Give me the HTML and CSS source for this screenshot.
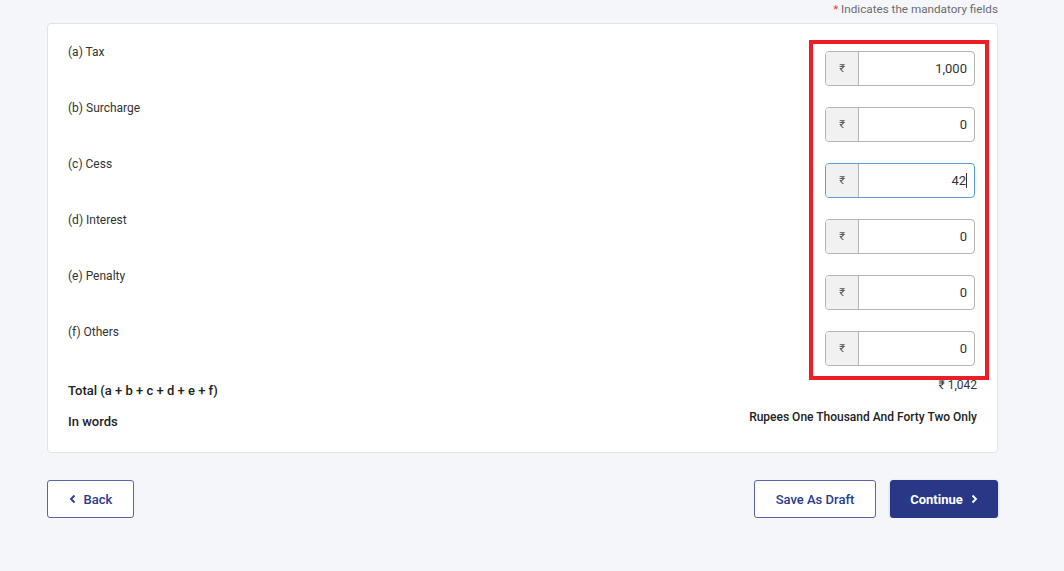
FILE: index.html
```html
<!DOCTYPE html>
<html lang="en">
<head>
<meta charset="utf-8">
<title>Tax details</title>
<link rel="stylesheet" href="styles.css">
</head>
<body>
<div class="page">
  <div class="note"><span class="req">*</span> Indicates the mandatory fields</div>
  <div class="card">
    <div class="fields">
      <div class="labels">
        <div class="label">(a) Tax</div>
        <div class="label">(b) Surcharge</div>
        <div class="label">(c) Cess</div>
        <div class="label">(d) Interest</div>
        <div class="label">(e) Penalty</div>
        <div class="label">(f) Others</div>
      </div>
      <div class="annot">
        <div class="input"><span class="pre">₹</span><span class="val">1,000</span></div>
        <div class="input"><span class="pre">₹</span><span class="val">0</span></div>
        <div class="input focus"><span class="pre">₹</span><span class="val">42<span class="caret"></span></span></div>
        <div class="input"><span class="pre">₹</span><span class="val">0</span></div>
        <div class="input"><span class="pre">₹</span><span class="val">0</span></div>
        <div class="input"><span class="pre">₹</span><span class="val">0</span></div>
      </div>
    </div>
    <div class="sum-row total">
      <div class="sum-label">Total (a + b + c + d + e + f)</div>
      <div class="sum-val">₹ 1,042</div>
    </div>
    <div class="sum-row words">
      <div class="sum-label">In words</div>
      <div class="sum-val bold">Rupees One Thousand And Forty Two Only</div>
    </div>
  </div>
  <div class="actions">
    <button class="btn outline back"><svg width="8" height="10" viewBox="0 0 8 10"><path d="M5.5 1.5 2 5l3.5 3.5" fill="none" stroke="currentColor" stroke-width="1.8"/></svg>Back</button>
    <div class="right">
      <button class="btn outline draft">Save As Draft</button>
      <button class="btn primary">Continue<svg width="8" height="10" viewBox="0 0 8 10"><path d="M2.5 1.5 6 5 2.5 8.5" fill="none" stroke="currentColor" stroke-width="1.8"/></svg></button>
    </div>
  </div>
</div>
</body>
</html>
```
FILE: styles.css
```css
html, body {
  margin: 0;
  padding: 0;
  background: #f5f6fa;
  font-family: Roboto, "Liberation Sans", sans-serif;
  color: #333;
}
.page {
  width: 951px;
  margin-left: 47px;
}
.note {
  text-align: right;
  font-size: 11.7px;
  line-height: 16px;
  color: #6b6b6b;
  padding-top: 1px;
  height: 22px;
}
.req { color: #e53935; }
.card {
  background: #fff;
  border: 1px solid #e0e3ec;
  border-radius: 4px;
  padding: 16px 20px 22px 20px;
  box-sizing: border-box;
  height: 430px;
}
.fields {
  display: flex;
  justify-content: space-between;
}
.labels {
  padding-top: 4px;
}
.label {
  font-size: 12px;
  line-height: 16px;
  height: 56px;
  color: #333;
}
.annot {
  border: 4px solid #ee1c25;
  padding: 7px 10px 7px 12px;
  margin-right: -12px;
  display: flex;
  flex-direction: column;
  gap: 21px;
}
.input {
  width: 150px;
  height: 35px;
  box-sizing: border-box;
  border: 1px solid #b3b3b3;
  border-radius: 4px;
  display: flex;
  overflow: hidden;
  background: #fff;
}
.input.focus {
  border-color: #5b9be6;
}
.pre {
  width: 32px;
  background: #f1f1f1;
  border-right: 1px solid #b3b3b3;
  display: flex;
  align-items: center;
  justify-content: center;
  font-size: 11px;
  color: #555;
}
.val {
  flex: 1;
  text-align: right;
  padding-right: 7px;
  font-size: 13px;
  line-height: 33px;
  color: #333;
}
.caret {
  display: inline-block;
  width: 1px;
  height: 15px;
  background: #333;
  vertical-align: -3px;
}
.sum-row {
  display: flex;
  justify-content: space-between;
  font-size: 12px;
  line-height: 16px;
}
.sum-label {
  font-size: 13px;
  font-weight: 500;
  color: #222;
}
.total { margin-top: -3px; }
.total .sum-label { padding-top: 6px; }
.total .sum-val { color: #333; }
.words { margin-top: 10px; }
.words .sum-label { padding-top: 5px; }
.bold { font-weight: 500; color: #222; }
.actions {
  display: flex;
  justify-content: space-between;
  margin-top: 27px;
}
.right {
  display: flex;
  gap: 14px;
}
.btn {
  height: 38px;
  box-sizing: border-box;
  border-radius: 3px;
  font-family: Roboto, "Liberation Sans", sans-serif;
  font-size: 13px;
  font-weight: 500;
  display: flex;
  align-items: center;
  justify-content: center;
  gap: 7px;
  cursor: pointer;
}
.outline {
  background: #fff;
  border: 1px solid #5a64aa;
  color: #2c3a8c;
}
.back { width: 87px; }
.draft { width: 122px; }
.primary {
  width: 108px;
  background: #283786;
  border: 1px solid #283786;
  color: #fff;
  font-weight: 700;
  box-shadow: 0 1px 3px rgba(0,0,0,0.2);
}
```
